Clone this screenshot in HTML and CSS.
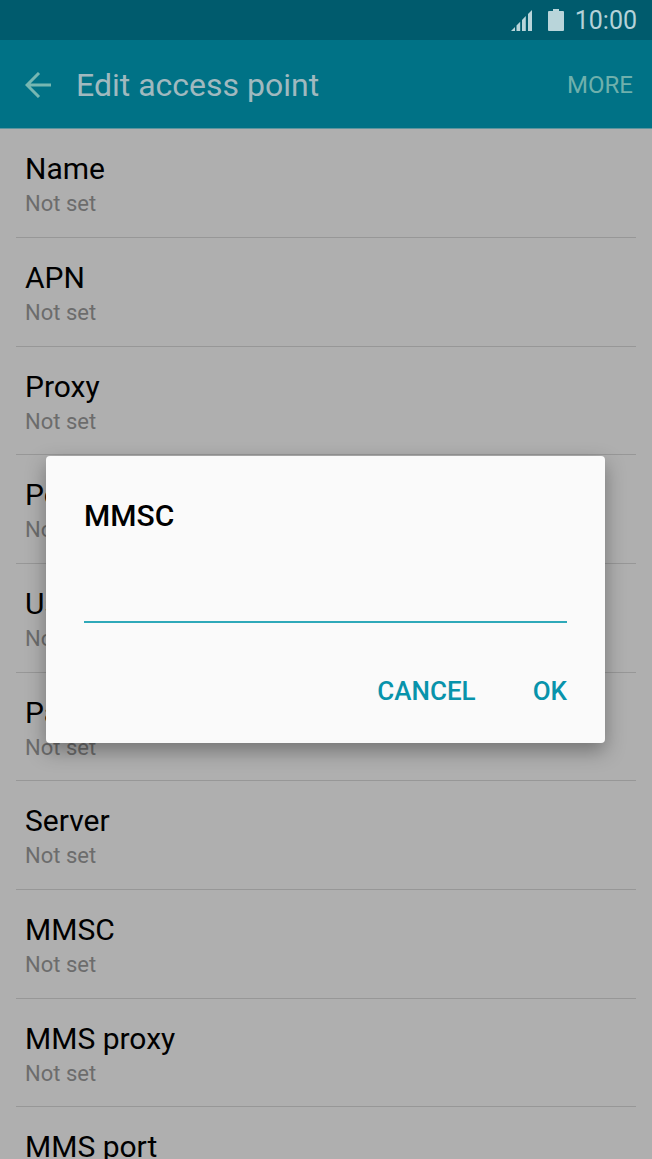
FILE: index.html
```
<!DOCTYPE html>
<html lang="en">
<head>
    <meta charset="UTF-8">
    <meta name="viewport" content="width=device-width, initial-scale=1.0">
    <title>Edit access point</title>
    <link rel="stylesheet" href="styles.css">
</head>
<body>
    <div class="status-bar">
        <svg class="signal" viewBox="0 0 22 22" width="22" height="22" aria-hidden="true">
            <path d="M0 22L4 18V22ZM5.5 16.5L9.2 12.8V22H5.5ZM11 11L14.8 7V22H11ZM17 5L21 1V22H17Z" />
        </svg>
        <svg class="battery" viewBox="0 0 16 22" width="16" height="22" aria-hidden="true">
            <path d="M5 0H11V2H15Q16 2 16 3V21Q16 22 15 22H1Q0 22 0 21V3Q0 2 1 2H5Z" />
        </svg>
        <span class="clock">10:00</span>
    </div>

    <header class="app-bar">
        <button class="back" type="button" aria-label="Back">
            <svg viewBox="0 0 26 26" width="26" height="26" aria-hidden="true">
                <path d="M26 13H2M14 1L2 13L14 25" />
            </svg>
        </button>
        <h1>Edit access point</h1>
        <button class="more" type="button">MORE</button>
    </header>

    <main class="content">
        <ul class="settings">
            <li><span class="name">Name</span><span class="value">Not set</span></li>
            <li><span class="name">APN</span><span class="value">Not set</span></li>
            <li><span class="name">Proxy</span><span class="value">Not set</span></li>
            <li><span class="name">Port</span><span class="value">Not set</span></li>
            <li><span class="name">Username</span><span class="value">Not set</span></li>
            <li><span class="name">Password</span><span class="value">Not set</span></li>
            <li><span class="name">Server</span><span class="value">Not set</span></li>
            <li><span class="name">MMSC</span><span class="value">Not set</span></li>
            <li><span class="name">MMS proxy</span><span class="value">Not set</span></li>
            <li><span class="name">MMS port</span><span class="value">Not set</span></li>
        </ul>
    </main>

    <div class="overlay">
        <form class="dialog" role="dialog" aria-labelledby="dialog-title">
            <label id="dialog-title" for="mmsc">MMSC</label>
            <input type="text" id="mmsc">
            <div class="actions">
                <button type="button">CANCEL</button>
                <button type="button">OK</button>
            </div>
        </form>
    </div>
</body>
</html>
```

FILE: styles.css
```
* {
    box-sizing: border-box;
}
body {
    margin: 0;
    height: 100vh;
    overflow: hidden;
    display: flex;
    flex-direction: column;
    background: #afafaf;
    color: #000;
    font-family: Roboto, sans-serif;
}
button {
    padding: 0;
    border: 0;
    background: none;
    font-family: inherit;
    cursor: pointer;
}

/* Status bar */
.status-bar {
    flex: none;
    height: 40px;
    padding: 2px 15px 0 0;
    display: flex;
    align-items: center;
    justify-content: flex-end;
    gap: 11px;
    background: #005b6d;
    color: #b5d2d9;
}
.signal,
.battery {
    margin-bottom: 2px;
    fill: #b9d5da;
}
.signal {
    margin-right: 4px;
}
.clock {
    font-size: 25px;
    line-height: 38px;
}

/* App bar */
.app-bar {
    flex: none;
    height: 89px;
    padding: 2px 19px 0 25px;
    display: flex;
    align-items: center;
    background: #007286;
    border-bottom: 1px solid #5c959f;
}
.back {
    height: 26px;
    margin-right: 25px;
}
.back svg {
    display: block;
    fill: none;
    stroke: #76b7b2;
    stroke-width: 3;
}
.app-bar h1 {
    flex: 1;
    margin: 0;
    color: #a0b9bf;
    font-size: 32px;
    font-weight: 400;
    line-height: 40px;
}
.more {
    color: #6fb0ac;
    font-size: 24px;
}

/* Settings list */
.content {
    flex: 1;
    min-height: 0;
    overflow: hidden;
}
.settings {
    margin: 0;
    padding: 0 16px;
    list-style: none;
}
.settings li {
    height: 109px;
    padding: 20px 9px 0;
    border-bottom: 1px solid #979797;
}
.settings li:nth-child(3n) {
    height: 108px;
}
.name,
.value {
    display: block;
}
.name {
    font-size: 30px;
    line-height: 40px;
}
.value {
    color: #6c6c6c;
    font-size: 22px;
    line-height: 30px;
}

/* Dialog */
.overlay {
    position: absolute;
    inset: 40px 0 0;
    padding: 0 47px 0 46px;
    display: flex;
    align-items: center;
}
.dialog {
    flex: 1;
    padding: 40px 38px 32px;
    display: flex;
    flex-direction: column;
    background: #fafafa;
    border-radius: 4px;
    box-shadow: 0 8px 20px rgba(0, 0, 0, 0.34);
}
.dialog label {
    font-size: 30px;
    font-weight: 500;
    line-height: 40px;
}
.dialog input {
    height: 48px;
    margin-top: 39px;
    padding: 0;
    border: 0;
    border-bottom: 2px solid #2fa9b9;
    outline: 0;
    background: none;
    font-family: inherit;
    font-size: 28px;
}
.actions {
    margin-top: 48px;
    display: flex;
    justify-content: flex-end;
    gap: 57px;
}
.actions button {
    color: #0893ab;
    font-size: 26px;
    font-weight: 500;
    line-height: 40px;
}
```
